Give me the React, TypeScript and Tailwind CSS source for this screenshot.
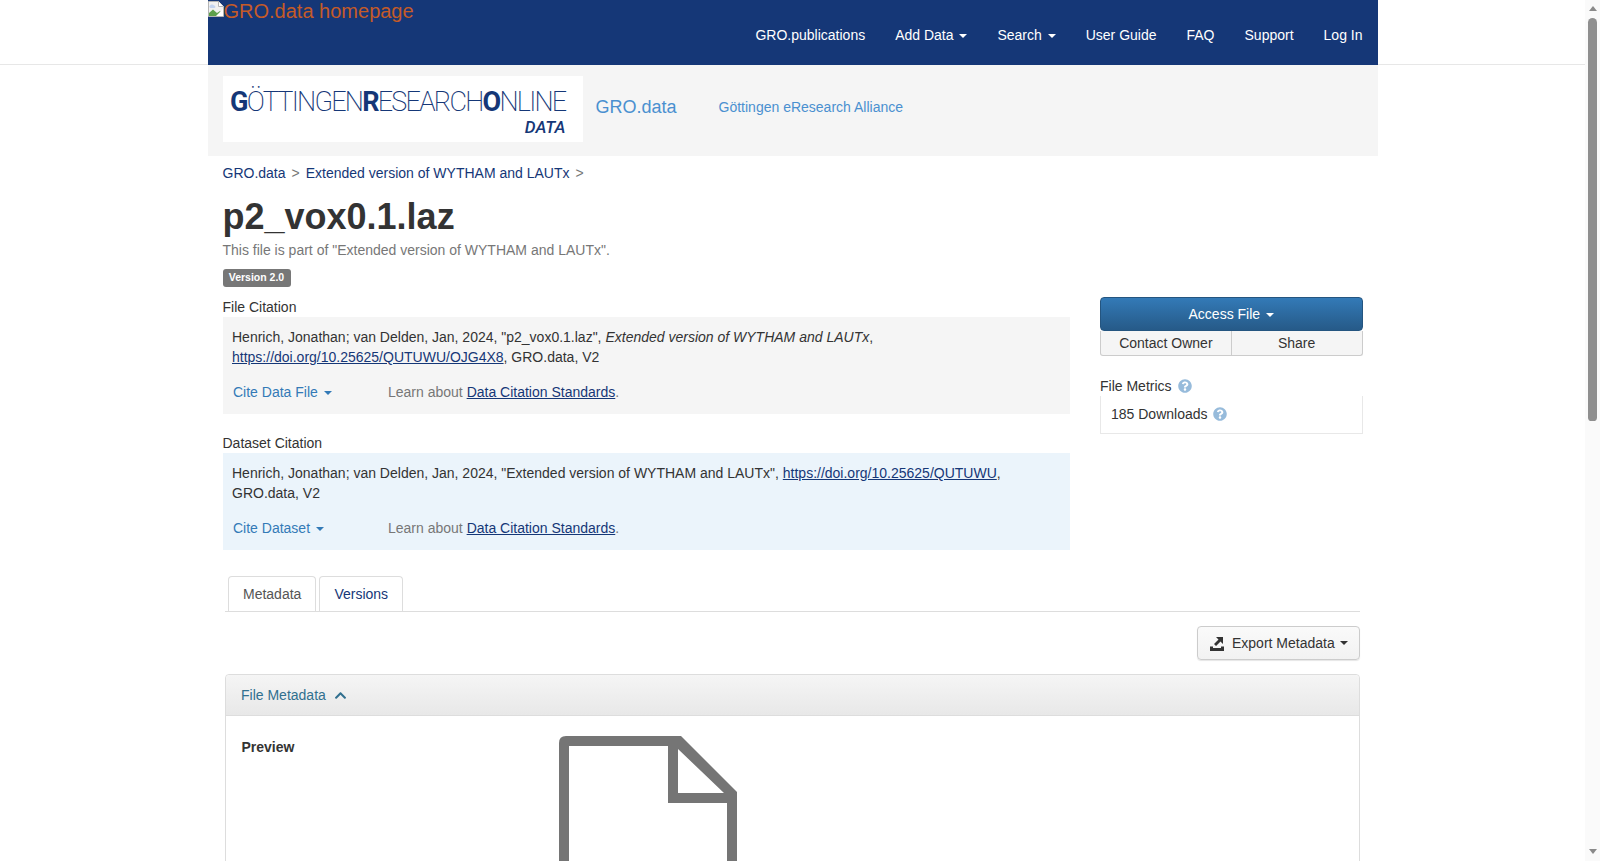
import React from "react";
import { FaChevronUp, FaQuestionCircle } from "react-icons/fa";

const Caret = ({ className = "" }: { className?: string }) => (
  <span className={`inline-block w-0 h-0 ml-[2px] align-middle border-t-4 border-x-4 border-x-transparent ${className}`} />
);

function BrokenImage() {
  return (
    <svg width="16" height="16" viewBox="0 0 16 16" className="shrink-0 mt-px">
      <path d="M0.5 0.5H10.5L15.5 5.5V15.5H0.5Z" fill="#f1f1f1" stroke="#b4b4b4" />
      <path d="M10.5 0.5V5.5H15.5" fill="#fff" stroke="#b4b4b4" />
      <path d="M2 4.5C3 3 5 3 6 4.5C7.5 4.5 8 6.5 6.5 7H2.5C1 6.5 1 5 2 4.5Z" fill="#c3d4f0" />
      <path d="M1 15V12L5 8.5L9 12L12 10L15 13V15Z" fill="#5da04b" />
      <path d="M8 15L15 8V15Z" fill="#fff" />
    </svg>
  );
}

function DocIcon() {
  return (
    <svg width="180" height="200" viewBox="0 0 180 200" className="block">
      <path
        fillRule="evenodd"
        fill="#757575"
        d="M7 0H122L178 56V200H0V7Q0 0 7 0ZM10 10V200H168V67H109V10ZM119 13V57H165Z"
      />
    </svg>
  );
}

function ExportIcon() {
  return (
    <svg width="14" height="15" viewBox="0 0 14 15" className="shrink-0">
      <path d="M0 10.5H3V12H11V10.5H14V15H0Z" fill="#333" />
      <path d="M6 1H13V8L10.5 5.5L6 10L4 8L8.5 3.5Z" fill="#333" />
    </svg>
  );
}

const navItems = [
  { label: "GRO.publications" },
  { label: "Add Data", caret: true },
  { label: "Search", caret: true },
  { label: "User Guide" },
  { label: "FAQ" },
  { label: "Support" },
  { label: "Log In" },
];

function Citation({
  tone,
  children,
  cite,
  citeWidth,
}: {
  tone: string;
  children: React.ReactNode;
  cite: string;
  citeWidth: string;
}) {
  return (
    <div className={`${tone} pt-[10px] pb-[12px] px-[9.5px]`}>
      <div>{children}</div>
      <div className="flex mt-[15px] pl-px">
        <a className={`text-[#337ab7] ${citeWidth}`}>
          {cite} <Caret />
        </a>
        <span className="text-[#777]">
          Learn about <a className="text-[#153777] underline">Data Citation Standards</a>.
        </span>
      </div>
    </div>
  );
}

export default function App() {
  return (
    <div className="flex h-[861px] overflow-hidden bg-white text-[14px] leading-[20px] text-[#333] [font-family:'Liberation_Sans',Arial,sans-serif]">
      <div className="flex-1 min-w-0">
        <header className="border-b border-[#e7e7e7] h-[65px]">
          <div className="w-[1170px] mx-auto h-[65px] bg-[#153777] flex justify-between">
            <a className="flex items-start text-[20px] leading-[22px] text-[#c55b28]">
              <BrokenImage />
              GRO.data homepage
            </a>
            <nav className="flex">
              {navItems.map((item) => (
                <a key={item.label} className="px-[15px] pt-[25px] pb-[20px] text-white">
                  {item.label}
                  {item.caret && (
                    <>
                      {" "}
                      <Caret />
                    </>
                  )}
                </a>
              ))}
            </nav>
          </div>
        </header>

        <div className="w-[1170px] mx-auto">
          <div className="h-[91px] bg-[#f5f5f5] pl-[15px] pt-[11px] flex items-start">
            <div className="w-[360px] h-[66px] bg-white flex flex-col items-end pr-[17px] pt-[10px] text-[#153777] [font-family:Roboto,sans-serif]">
              <div className="text-[27px] leading-[32px] font-extralight tracking-[-1.75px] whitespace-nowrap">
                <b className="font-bold">G</b>ÖTTINGEN<b className="font-bold">R</b>ESEARCH<b className="font-bold">O</b>NLINE
              </div>
              <div className="text-[17px] leading-[16px] italic font-medium mt-[1px]">DATA</div>
            </div>
            <a className="ml-[13px] mt-[19px] text-[18px] leading-[24px] text-[#4a90d0]">GRO.data</a>
            <a className="ml-[42px] mt-[21px] text-[#4a90d0]">Göttingen eResearch Alliance</a>
          </div>

          <div className="px-[15px]">
            <div className="pt-[7px] flex">
              <a className="text-[#153777]">GRO.data</a>
              <span className="text-[#777] mx-[6px]">&gt;</span>
              <a className="text-[#153777]">Extended version of WYTHAM and LAUTx</a>
              <span className="text-[#777] mx-[6px]">&gt;</span>
            </div>
            <h1 className="text-[36px] leading-[40px] font-bold mt-[14px]">p2_vox0.1.laz</h1>
            <p className="text-[#777] mt-[3px]">This file is part of "Extended version of WYTHAM and LAUTx".</p>
            <div className="mt-[9px] w-[68px] h-[18px] rounded-[3px] bg-[#777] text-white text-[10.5px] leading-[17px] font-bold text-center">
              Version 2.0
            </div>

            <div className="flex gap-[30px] mt-[10px]">
              <div className="w-[847.5px]">
                <div>File Citation</div>
                <Citation tone="bg-[#f5f5f5]" cite="Cite Data File" citeWidth="w-[155px]">
                  Henrich, Jonathan; van Delden, Jan, 2024, "p2_vox0.1.laz", <i>Extended version of WYTHAM and LAUTx</i>,{" "}
                  <a className="text-[#153777] underline">https://doi.org/10.25625/QUTUWU/OJG4X8</a>, GRO.data, V2
                </Citation>
                <div className="mt-[19px]">Dataset Citation</div>
                <Citation tone="bg-[#ebf4fb]" cite="Cite Dataset" citeWidth="w-[155px]">
                  Henrich, Jonathan; van Delden, Jan, 2024, "Extended version of WYTHAM and LAUTx",{" "}
                  <a className="text-[#153777] underline">https://doi.org/10.25625/QUTUWU</a>, GRO.data, V2
                </Citation>
              </div>

              <div className="flex-1 min-w-0">
                <button className="w-full h-[34px] rounded-[4px] border border-[#245580] bg-gradient-to-b from-[#337ab7] to-[#265a88] text-white">
                  Access File <Caret />
                </button>
                <div className="flex h-[25px]">
                  <button className="flex-1 border border-t-0 border-[#ccc] rounded-bl-[3px] bg-[#f5f5f5]">Contact Owner</button>
                  <button className="flex-1 border border-l-0 border-t-0 border-[#ccc] rounded-br-[3px] bg-[#f5f5f5]">Share</button>
                </div>
                <div className="mt-[20px] flex items-center">
                  File Metrics
                  <FaQuestionCircle className="ml-[6px] text-[#97bbdb] text-[14px]" />
                </div>
                <div className="border border-t-0 border-[#e8e8e8] pt-[8px] pb-[9px] px-[10px] flex items-center">
                  185 Downloads
                  <FaQuestionCircle className="ml-[5px] text-[#97bbdb] text-[14px]" />
                </div>
              </div>
            </div>

            <div className="mx-[2.5px] mt-[26px]">
              <div className="flex gap-[3px] pl-[3px] border-b border-[#ddd]">
                <a className="h-[35px] px-[14px] pt-[7px] border border-b-0 border-[#ddd] rounded-t-[4px] text-[#555]">Metadata</a>
                <a className="h-[35px] px-[14px] pt-[7px] border border-b-0 border-[#ddd] rounded-t-[4px] text-[#153777]">Versions</a>
              </div>
              <div className="flex justify-end mt-[14px] mb-[14px]">
                <button className="h-[34px] w-[163px] flex items-center pl-[12px] border border-[#ccc] rounded-[4px] bg-gradient-to-b from-[#fafafa] to-[#f2f2f2] shadow-[0_1px_1px_rgba(0,0,0,0.1)]">
                  <ExportIcon />
                  <span className="ml-[8px]">Export Metadata</span>
                  <Caret className="ml-[5px]" />
                </button>
              </div>
              <div className="border border-[#ddd] rounded-t-[4px] h-[300px]">
                <div className="h-[41px] border-b border-[#ddd] rounded-t-[4px] bg-gradient-to-b from-[#f5f5f5] to-[#e8e8e8] pl-[15px] pt-[10px] flex items-start text-[#31708f]">
                  File Metadata
                  <FaChevronUp className="ml-[8px] mt-[4px] text-[13px]" />
                </div>
                <div className="flex pl-[15.5px] pt-[20px]">
                  <b className="w-[317px] shrink-0 pt-px">Preview</b>
                  <DocIcon />
                </div>
              </div>
            </div>
          </div>
        </div>
      </div>

      <div className="w-[15px] shrink-0 bg-[#fafafa] flex flex-col items-center pt-[6px] pb-[7px]">
        <span className="w-0 h-0 border-x-[4.5px] border-x-transparent border-b-[5px] border-b-[#8a8a8a]" />
        <span className="w-[9px] h-[403px] mt-[7px] rounded-t-[5px] rounded-b-[4px] bg-[#8f8f8f]" />
        <span className="w-0 h-0 mt-auto border-x-[4.5px] border-x-transparent border-t-[5px] border-t-[#8a8a8a]" />
      </div>
    </div>
  );
}
